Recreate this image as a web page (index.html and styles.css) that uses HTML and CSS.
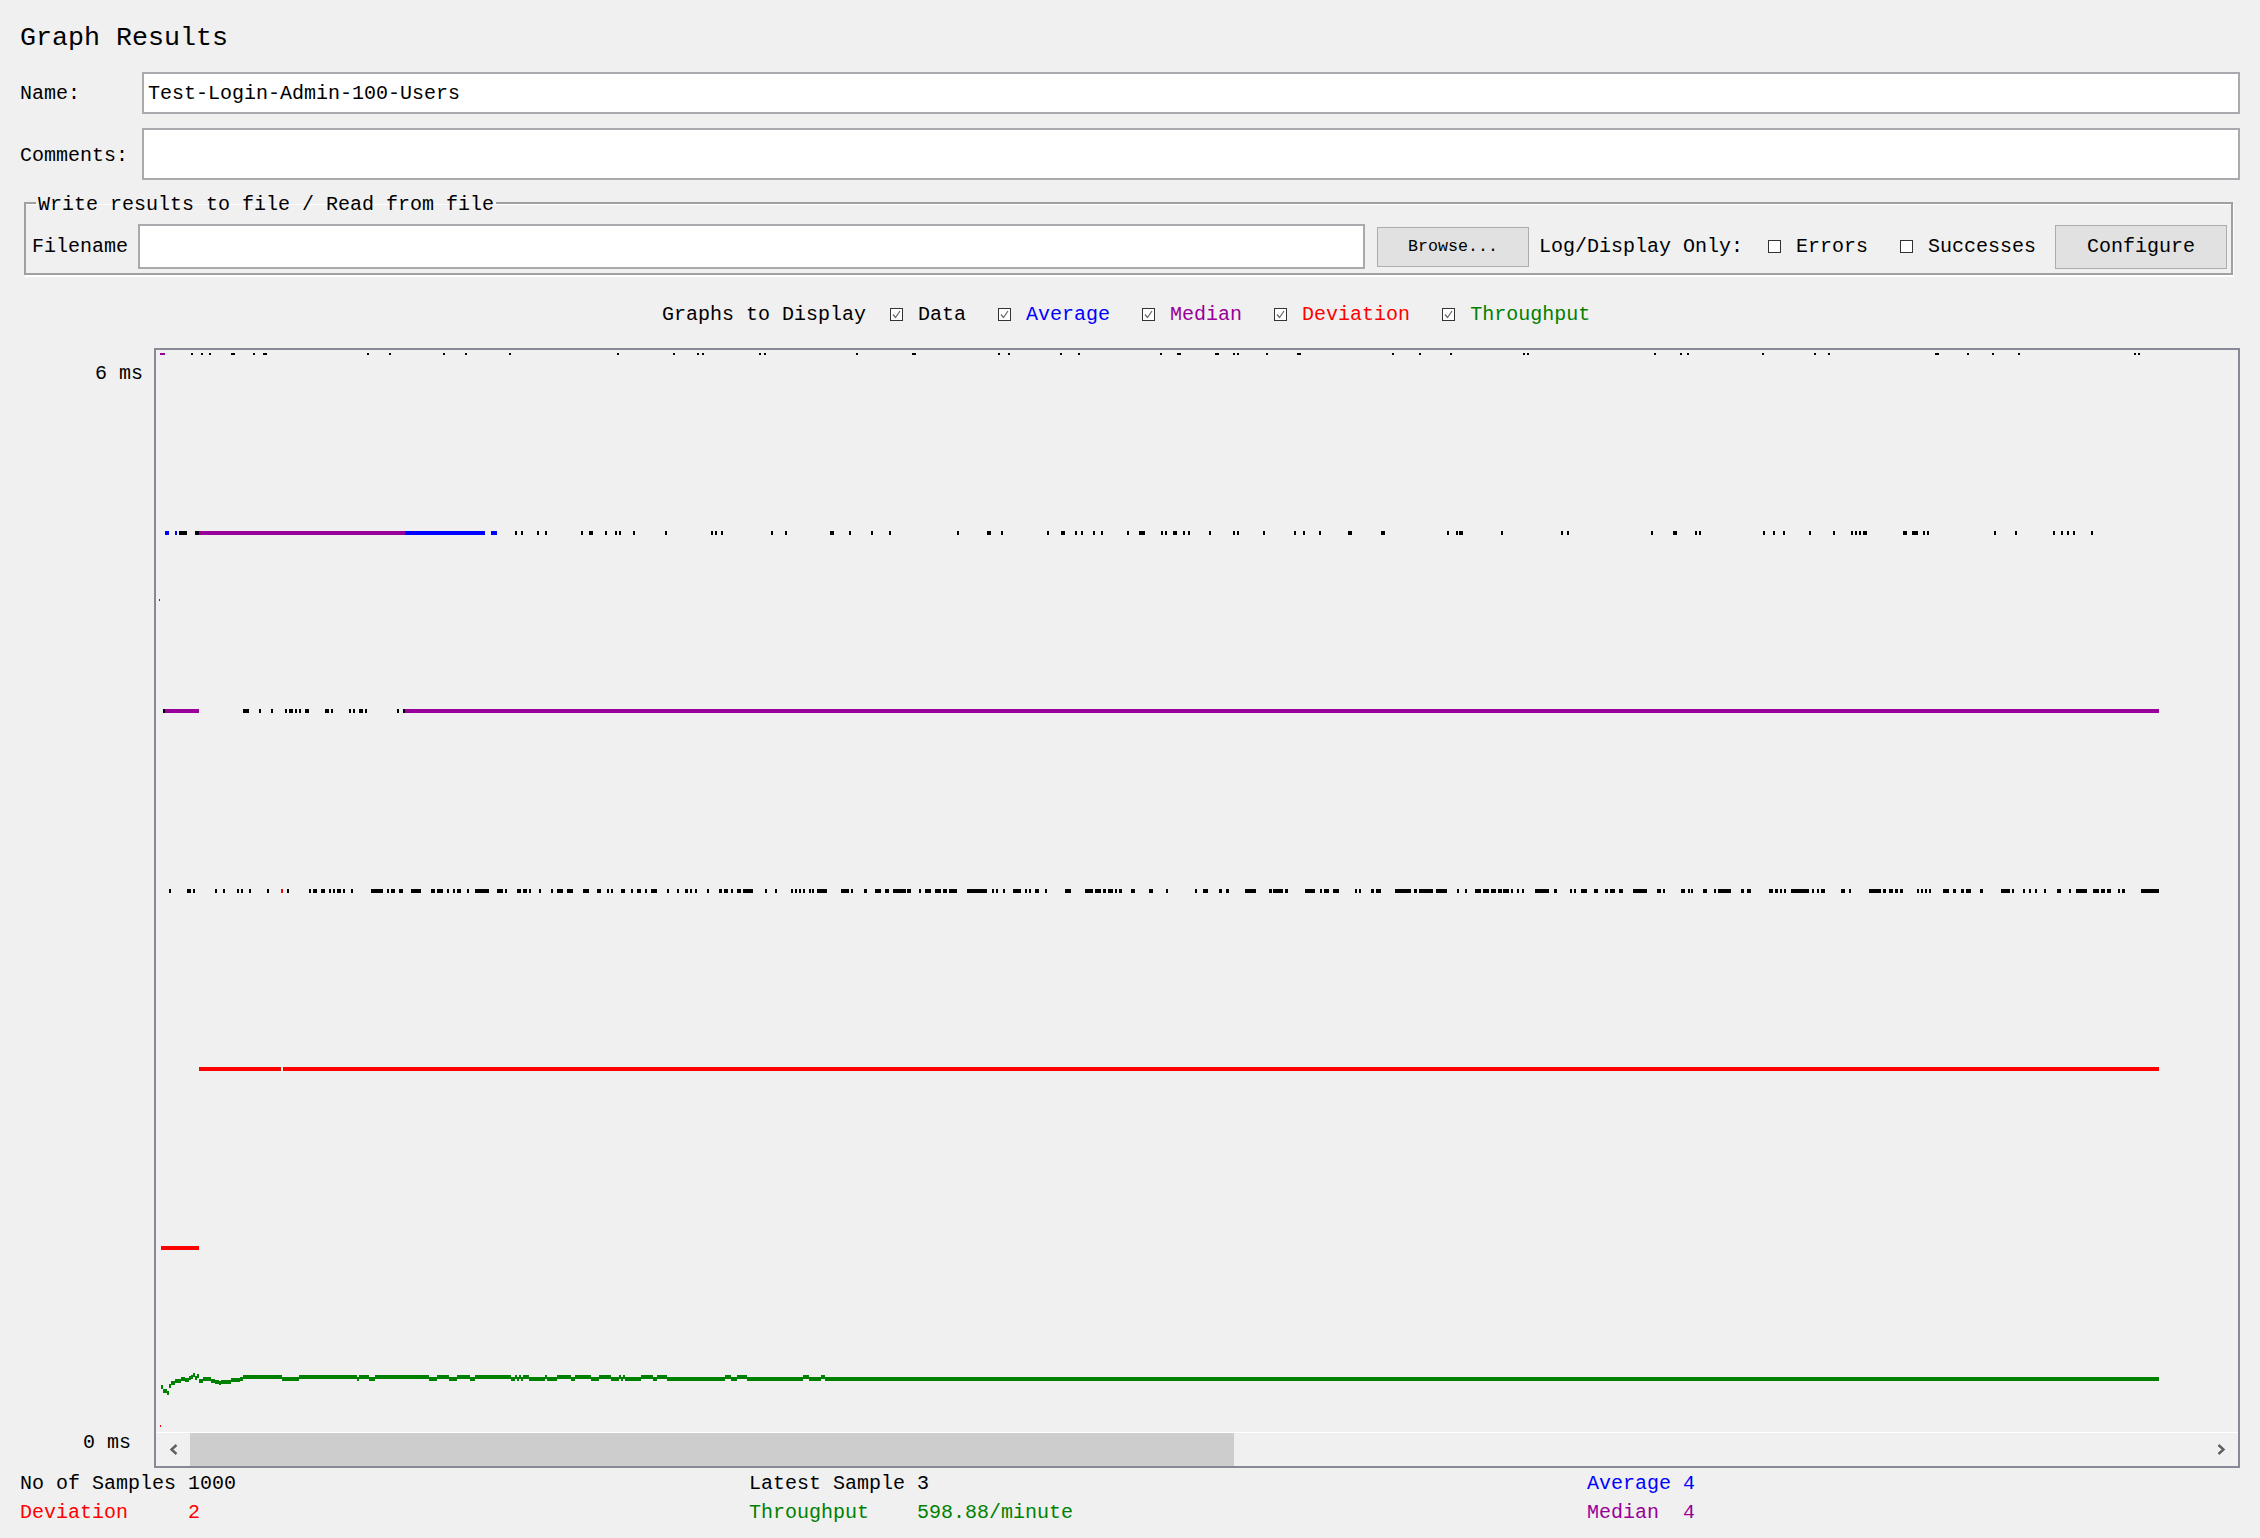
FILE: index.html
```html
<!DOCTYPE html>
<html lang="en">
<head>
<meta charset="utf-8">
<title>Graph Results</title>
<link rel="stylesheet" href="styles.css">
</head>
<body>
<main class="app">
  <h1 class="title">Graph Results</h1>
  <div class="field field-name">
    <label class="field-label" for="name">Name:</label>
    <input class="text-input" id="name" type="text" value="Test-Login-Admin-100-Users">
  </div>
  <div class="field field-comments">
    <label class="field-label field-label-low" for="comments">Comments:</label>
    <input class="text-input" id="comments" type="text">
  </div>
  <fieldset class="file-box">
    <legend class="file-legend">Write results to file / Read from file</legend>
    <div class="file-row">
      <label class="file-label" for="filename">Filename</label>
      <input class="text-input file-input" id="filename" type="text">
      <button class="btn btn-browse" type="button">Browse...</button>
      <span class="log-label">Log/Display Only:</span>
      <span class="check check-errors"><svg class="box" viewBox="0 0 13 13"><rect x="0.5" y="0.5" width="12" height="12"/></svg><span>Errors</span></span>
      <span class="check check-success"><svg class="box" viewBox="0 0 13 13"><rect x="0.5" y="0.5" width="12" height="12"/></svg><span>Successes</span></span>
      <button class="btn btn-config" type="button">Configure</button>
    </div>
  </fieldset>
  <div class="display-row">
    <span>Graphs to Display</span>
    <span class="check check-first"><svg class="box" viewBox="0 0 13 13"><rect x="0.5" y="0.5" width="12" height="12"/><path class="tick" d="M3 6.5l2.5 3L10 3"/></svg><span>Data</span></span>
    <span class="check c-blue"><svg class="box" viewBox="0 0 13 13"><rect x="0.5" y="0.5" width="12" height="12"/><path class="tick" d="M3 6.5l2.5 3L10 3"/></svg><span>Average</span></span>
    <span class="check c-purple"><svg class="box" viewBox="0 0 13 13"><rect x="0.5" y="0.5" width="12" height="12"/><path class="tick" d="M3 6.5l2.5 3L10 3"/></svg><span>Median</span></span>
    <span class="check c-red"><svg class="box" viewBox="0 0 13 13"><rect x="0.5" y="0.5" width="12" height="12"/><path class="tick" d="M3 6.5l2.5 3L10 3"/></svg><span>Deviation</span></span>
    <span class="check c-green"><svg class="box" viewBox="0 0 13 13"><rect x="0.5" y="0.5" width="12" height="12"/><path class="tick" d="M3 6.5l2.5 3L10 3"/></svg><span>Throughput</span></span>
  </div>
  <div class="chart-row">
    <div class="axis">
      <span class="axis-top">6 ms</span>
      <span class="axis-bottom">0 ms</span>
    </div>
    <div class="plot">
      <svg class="graph" viewBox="156 350 2082 1082" width="2082" height="1082">
        <g class="s-thin s-black"><path transform="translate(0 354)" d="M191 0h2M201 0h2M209 0h2M231 0h4M253 0h2M263 0h4M367 0h2M389 0h2M443 0h2M465 0h2M509 0h2M617 0h2M673 0h2M697 0h2M702 0h2M759 0h2M764 0h2M856 0h2M912 0h4M998 0h2M1008 0h2M1060 0h2M1078 0h2M1160 0h2M1177 0h4M1215 0h4M1233 0h2M1237 0h2M1266 0h2M1297 0h4M1392 0h2M1419 0h2M1450 0h2M1523 0h2M1527 0h2M1654 0h2M1680 0h2M1687 0h2M1762 0h2M1814 0h2M1828 0h2M1935 0h4M1967 0h2M1992 0h2M2018 0h2M2134 0h2M2138 0h2"/></g>
        <path class="s-thin s-purple" transform="translate(0 354)" d="M160 0h5"/>
        <g class="s-bar s-black">
          <path transform="translate(0 533)" d="M179 0h8M195 0h4M515 0h2M521 0h2M537 0h2M545 0h2M581 0h2M589 0h4M605 0h2M615 0h2M619 0h2M633 0h2M665 0h2M711 0h2M715 0h2M721 0h2M771 0h2M785 0h2M830 0h4M849 0h2M871 0h2M889 0h2M957 0h2M987 0h4M1001 0h2M1047 0h2M1061 0h4M1075 0h2M1081 0h2M1093 0h2M1101 0h2M1127 0h2M1139 0h6M1161 0h2M1165 0h2M1173 0h4M1183 0h2M1188 0h2M1209 0h2M1233 0h2M1237 0h2M1263 0h2M1294 0h2M1303 0h2M1319 0h2M1348 0h4M1381 0h4M1447 0h2M1456 0h2M1459 0h4M1501 0h2M1561 0h2M1567 0h2M1651 0h2M1673 0h4M1695 0h2M1699 0h2M1763 0h2M1773 0h2M1783 0h2M1809 0h2M1833 0h2M1851 0h2M1855 0h2M1859 0h2M1863 0h4M1903 0h4M1912 0h6M1923 0h2M1927 0h2M1994 0h2M2015 0h2M2053 0h2M2061 0h2M2067 0h2M2073 0h2M2091 0h2"/>
          <path transform="translate(0 711)" d="M163 0h2M243 0h6M259 0h2M271 0h2M285 0h2M289 0h4M295 0h2M299 0h2M305 0h4M325 0h4M331 0h2M349 0h2M353 0h2M359 0h4M365 0h2M397 0h2M403 0h2"/>
          <path transform="translate(0 891)" d="M169 0h2M187 0h4M193 0h2M215 0h2M223 0h2M237 0h2M241 0h2M249 0h2M267 0h2M287 0h2M309 0h2M313 0h4M321 0h4M329 0h2M333 0h2M337 0h4M343 0h2M351 0h2M371 0h12M387 0h2M391 0h4M399 0h4M411 0h10M431 0h4M437 0h6M447 0h2M453 0h2M457 0h4M467 0h2M475 0h14M497 0h6M505 0h2M517 0h4M523 0h4M529 0h2M539 0h2M551 0h2M557 0h6M567 0h6M583 0h6M597 0h4M607 0h2M611 0h2M621 0h4M631 0h2M637 0h4M645 0h2M651 0h6M667 0h2M677 0h2M685 0h3M690 0h2M695 0h2M707 0h2M719 0h3M724 0h4M731 0h2M737 0h4M743 0h10M765 0h2M775 0h2M791 0h2M795 0h2M799 0h2M803 0h2M809 0h2M812 0h2M817 0h10M841 0h8M851 0h2M864 0h3M875 0h6M885 0h4M893 0h13M907 0h4M919 0h2M925 0h6M935 0h6M943 0h4M949 0h8M967 0h20M992 0h2M996 0h2M1003 0h2M1013 0h8M1025 0h2M1029 0h2M1035 0h4M1045 0h2M1065 0h6M1085 0h8M1095 0h6M1103 0h3M1108 0h5M1115 0h2M1119 0h3M1131 0h4M1149 0h4M1166 0h2M1195 0h2M1203 0h5M1219 0h3M1226 0h3M1245 0h11M1269 0h3M1273 0h10M1285 0h3M1305 0h10M1320 0h2M1324 0h5M1333 0h6M1355 0h2M1359 0h2M1371 0h3M1376 0h5M1395 0h16M1414 0h3M1419 0h14M1436 0h11M1457 0h2M1465 0h2M1475 0h6M1483 0h6M1491 0h5M1498 0h4M1503 0h6M1511 0h2M1517 0h2M1522 0h2M1535 0h14M1554 0h3M1570 0h2M1574 0h2M1581 0h6M1594 0h4M1605 0h3M1610 0h5M1619 0h4M1633 0h14M1657 0h4M1663 0h2M1681 0h4M1688 0h2M1691 0h2M1703 0h4M1714 0h2M1718 0h13M1741 0h3M1747 0h4M1769 0h4M1775 0h3M1780 0h2M1784 0h2M1791 0h18M1812 0h2M1817 0h2M1821 0h4M1841 0h4M1849 0h2M1869 0h12M1883 0h3M1889 0h4M1895 0h3M1900 0h3M1917 0h2M1921 0h2M1925 0h2M1929 0h2M1943 0h6M1953 0h3M1961 0h3M1966 0h5M1980 0h3M2001 0h9M2012 0h2M2023 0h2M2029 0h2M2035 0h2M2044 0h2M2057 0h4M2069 0h2M2076 0h11M2093 0h6M2101 0h4M2107 0h4M2118 0h2M2122 0h3M2141 0h18"/>
        </g>
        <path class="s-bar s-blue" transform="translate(0 533)" d="M165 0h4M175 0h2M405 0h80M491 0h6"/>
        <path class="s-bar s-purple" transform="translate(0 533)" d="M199 0h206"/>
        <path class="s-bar s-purple" transform="translate(0 711)" d="M165 0h34M405 0h1754"/>
        <path class="s-bar s-red" transform="translate(0 891)" d="M281 0h2"/>
        <path class="s-bar s-red" transform="translate(0 1069)" d="M199 0h82M283 0h1876"/>
        <path class="s-bar s-red" transform="translate(0 1248)" d="M161 0h38"/>
        <path class="s-thin s-dark" d="M159 600h1"/>
        <path class="s-thin s-red" d="M160 1426h1"/>
        <path class="s-bar s-green" d="M161 1387H163M163 1391H167M167 1393H169M169 1386H171M171 1383H175M175 1381H181M181 1379H185M185 1380H189M189 1378H191M191 1377H193M193 1375H195M195 1378H197M197 1376H199M199 1381H203M203 1379H211M211 1381H215M215 1382H219M219 1383H221M221 1382H231M231 1380H240M240 1379H243M243 1377H282M282 1379H299M299 1377H357M357 1379H359M359 1377H369M369 1379H375M375 1377H429M429 1379H437M437 1377H449M449 1379H457M457 1377H470M470 1379H475M475 1377H511M511 1379H515M515 1377H517M517 1379H519M519 1377H521M521 1379H523M523 1377H529M529 1379H545M545 1377H547M547 1379H557M557 1377H571M571 1379H575M575 1377H591M591 1379H599M599 1377H611M611 1379H619M619 1377H621M621 1379H623M623 1377H625M625 1379H641M641 1377H653M653 1379H657M657 1377H667M667 1379H725M725 1377H731M731 1379H737M737 1377H747M747 1379H803M803 1377H809M809 1379H821M821 1377H825M825 1379H2159"/>
      </svg>
      <div class="scrollbar">
        <span class="scroll-btn"><svg class="chevron" viewBox="0 0 9 11"><path d="M7.5 1L2.5 5.5L7.5 10"/></svg></span>
        <span class="scroll-thumb"></span>
        <span class="scroll-track"></span>
        <span class="scroll-btn"><svg class="chevron" viewBox="0 0 9 11"><path d="M1.5 1L6.5 5.5L1.5 10"/></svg></span>
      </div>
    </div>
  </div>
  <div class="stats">
    <span>No of Samples 1000</span>
    <span>Latest Sample 3</span>
    <span class="c-blue">Average 4</span>
    <span class="c-red">Deviation     2</span>
    <span class="c-green">Throughput    598.88/minute</span>
    <span class="c-purple">Median  4</span>
  </div>
</main>
</body>
</html>
```

FILE: styles.css
```css
* {
  box-sizing: border-box;
}

html,
body {
  margin: 0;
  padding: 0;
  background: #f0f0f0;
}

body {
  font-family: "Liberation Mono", "Noto Sans CJK SC", monospace;
  font-size: 20px;
  color: #000;
}

.app {
  width: 2260px;
  height: 1538px;
  padding: 0 20px;
  overflow: hidden;
  display: flex;
  flex-direction: column;
}

.title {
  margin: 0;
  height: 72px;
  font-size: 26.67px;
  font-weight: normal;
  line-height: 76px;
}

.field {
  display: flex;
  align-items: center;
}

.field-name {
  height: 42px;
  margin-bottom: 14px;
}

.field-comments {
  height: 52px;
  margin-bottom: 9px;
}

.field-label {
  width: 122px;
  flex: none;
}

.field-label-low {
  padding-top: 2px;
}

.text-input {
  flex: 1;
  height: 100%;
  min-width: 0;
  padding: 0 4px;
  border: 2px solid #a9a9ae;
  border-radius: 0;
  outline: none;
  background: #fff;
  color: #000;
  font: inherit;
}

.file-box {
  margin: 0 7px 0 4px;
  padding: 0 4px 4px 6px;
  min-width: 0;
  border: 2px solid #a0a0a0;
  box-shadow: 1px 2px 0 #fff, inset 0 1px 0 #fff;
}

.file-legend {
  margin-left: 4px;
  padding: 4px 2px 0;
  line-height: 24px;
}

.file-row {
  display: flex;
  align-items: center;
  height: 45px;
  margin-top: 7px;
}

.file-label {
  width: 106px;
  flex: none;
}

.file-input {
  height: 45px;
}

.btn {
  flex: none;
  padding: 0;
  border: 1px solid #adadad;
  border-radius: 0;
  background: #e1e1e1;
  color: #000;
  font-family: inherit;
}

.btn-browse {
  width: 152px;
  height: 40px;
  margin-left: 12px;
  font-size: 16.67px;
}

.btn-config {
  width: 172px;
  height: 44px;
  margin-left: 19px;
  font-size: 20px;
}

.log-label {
  margin-left: 10px;
  flex: none;
}

.check {
  display: inline-flex;
  align-items: center;
  gap: 15px;
  margin-left: 32px;
  flex: none;
}

.check-errors {
  margin-left: 25px;
}

.check-first {
  margin-left: 24px;
}

.box {
  width: 13px;
  height: 13px;
  flex: none;
  fill: #fff;
  stroke: #333;
}

.tick {
  fill: none;
  stroke: #666;
  stroke-width: 1.2;
}

.display-row {
  display: flex;
  align-items: center;
  height: 73px;
  padding: 6px 0 0 642px;
}

.chart-row {
  display: flex;
  height: 1120px;
}

.axis {
  width: 134px;
  flex: none;
  padding: 14px 0 13px;
  display: flex;
  flex-direction: column;
  justify-content: space-between;
  align-items: flex-end;
  line-height: 24px;
}

.axis-top {
  margin-right: 11px;
}

.axis-bottom {
  margin-right: 23px;
}

.plot {
  flex: 1;
  display: flex;
  flex-direction: column;
  border: 2px solid #868a94;
}

.graph {
  display: block;
  flex: none;
  shape-rendering: crispEdges;
}

.graph path {
  fill: none;
}

.s-bar {
  stroke-width: 4;
}

.s-thin {
  stroke-width: 2;
}

.s-black {
  stroke: #000;
}

.s-dark {
  stroke: #444;
}

.s-blue {
  stroke: #00f;
}

.s-purple {
  stroke: #909;
}

.s-red {
  stroke: #f00;
}

.s-green {
  stroke: #008000;
}

.scrollbar {
  flex: 1;
  display: flex;
  border-top: 1px solid #fff;
}

.scroll-btn {
  width: 34px;
  flex: none;
  display: flex;
  align-items: center;
  justify-content: center;
}

.scroll-thumb {
  width: 1044px;
  flex: none;
  background: #cdcdcd;
}

.scroll-track {
  flex: 1;
}

.chevron {
  width: 9px;
  height: 11px;
  fill: none;
  stroke: #606060;
  stroke-width: 2.4;
}

.stats {
  display: grid;
  grid-template-columns: 729px 838px 1fr;
  grid-auto-rows: 29px;
  padding-top: 1px;
  line-height: 29px;
  white-space: pre;
}

.c-blue {
  color: #00f;
}

.c-purple {
  color: #909;
}

.c-red {
  color: #f00;
}

.c-green {
  color: #008000;
}
```
